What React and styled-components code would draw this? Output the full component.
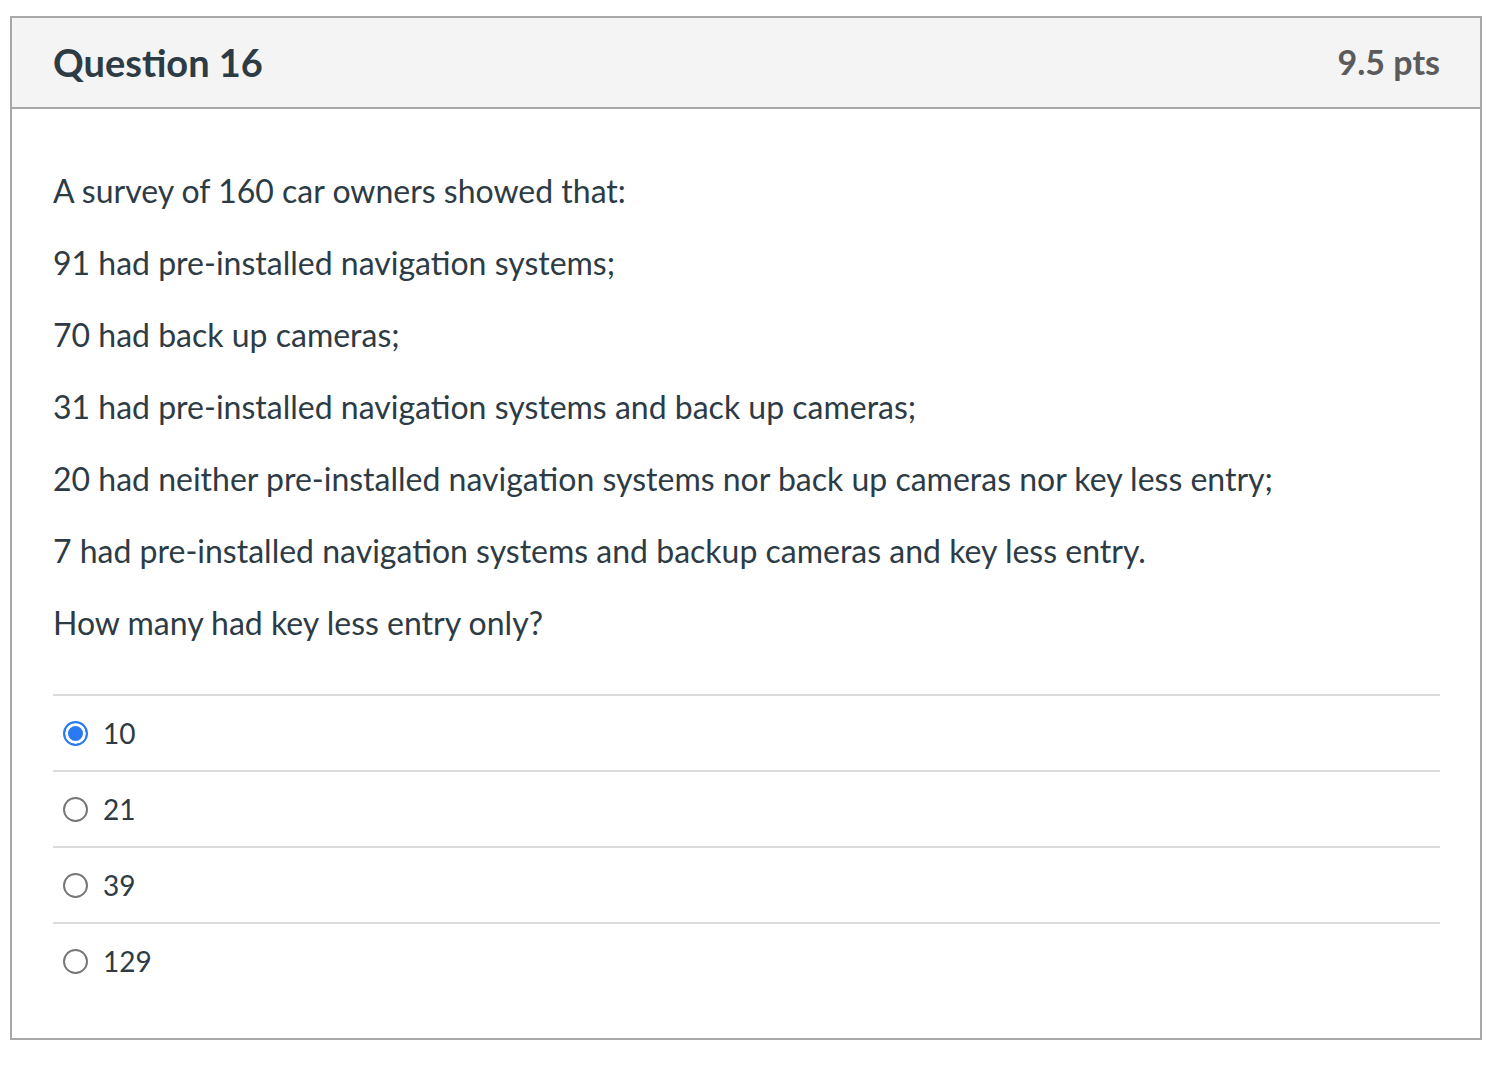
import styled, { createGlobalStyle } from "styled-components";

const GlobalStyle = createGlobalStyle`
  body {
    margin: 0;
    background: #ffffff;
    font-family: Lato, "Open Sans", sans-serif;
    color: #2d3b45;
  }
`;

const Page = styled.div`
  padding: 16px 28px 0 10px;
`;

const Card = styled.div`
  border: 2px solid #a8a8a8;
  background: #fff;
`;

const Header = styled.div`
  display: flex;
  justify-content: space-between;
  align-items: center;
  box-sizing: border-box;
  height: 91px;
  padding: 0 40px 2px 41px;
  background: #f4f4f4;
  border-bottom: 2px solid #a8a8a8;
`;

const Title = styled.h2`
  margin: 0;
  font-size: 38px;
  font-weight: 700;
  color: #2d3b45;
`;

const Points = styled.div`
  font-size: 34px;
  font-weight: 700;
  color: #5b5b5b;
`;

const Body = styled.div`
  padding: 60px 40px 40px 41px;
`;

const Text = styled.p`
  margin: 0 0 28px 0;
  font-size: 32px;
  line-height: 44px;

  &:last-of-type {
    margin-bottom: 0;
  }
`;

const Answers = styled.div`
  margin-top: 49px;
`;

const Answer = styled.label`
  display: flex;
  align-items: center;
  gap: 15px;
  height: 74px;
  padding-left: 10px;
  border-top: 2px solid #dcdcdc;
  font-size: 28px;
  color: #2d3b45;
  cursor: pointer;
`;

const Radio = styled.span`
  box-sizing: border-box;
  width: 25px;
  height: 25px;
  border-radius: 50%;
  border: 2px solid ${(p) => (p.$checked ? "#2b7af5" : "#777777")};
  background: ${(p) => (p.$checked ? "#2b7af5" : "#fff")};
  box-shadow: ${(p) => (p.$checked ? "inset 0 0 0 3px #fff" : "none")};
  flex-shrink: 0;
`;

const lines = [
  "A survey of 160 car owners showed that:",
  "91 had pre-installed navigation systems;",
  "70 had back up cameras;",
  "31 had pre-installed navigation systems and back up cameras;",
  "20 had neither pre-installed navigation systems nor back up cameras nor key less entry;",
  "7 had pre-installed navigation systems and backup cameras and key less entry.",
  "How many had key less entry only?",
];

const options = ["10", "21", "39", "129"];

export default function App() {
  const selected = "10";
  return (
    <Page>
      <GlobalStyle />
      <Card>
        <Header>
          <Title>Question 16</Title>
          <Points>9.5 pts</Points>
        </Header>
        <Body>
          {lines.map((line) => (
            <Text key={line}>{line}</Text>
          ))}
          <Answers>
            {options.map((opt) => (
              <Answer key={opt}>
                <Radio $checked={opt === selected} />
                {opt}
              </Answer>
            ))}
          </Answers>
        </Body>
      </Card>
    </Page>
  );
}
